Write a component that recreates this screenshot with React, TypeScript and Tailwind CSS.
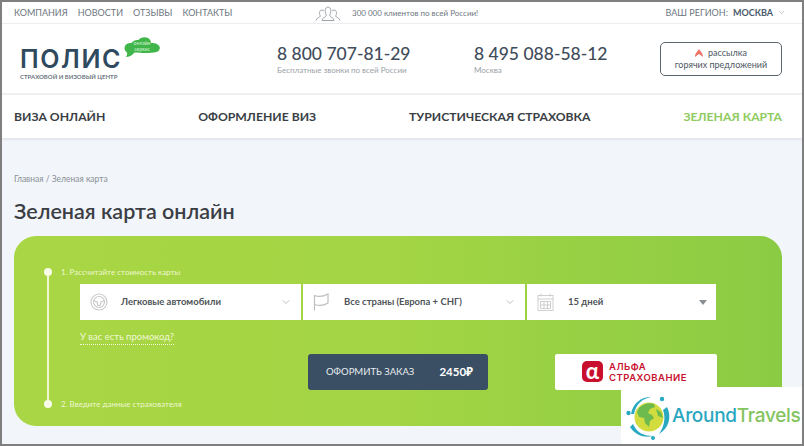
import { ChevronDown } from 'lucide-react';

const font = { fontFamily: 'Lato, "Noto Sans", sans-serif' };

function People() {
  return (
    <svg width="26" height="18" viewBox="0 0 26 18" fill="none" stroke="#8a929c" strokeWidth="0.8">
      <path d="M1 16.5c0-2.5 4-3 4.5-4.5-1.5-1.5-1.5-6 1.5-6 1 0 1.500.3 2 1" />
      <path d="M25 16.500c0-2.500-4-3-4.500-4.500 1.500-1.500 1.500-6-1.500-6-1 0-1.500.3-2 1" />
      <path d="M7 16.500c0-3 4-3 4.500-5.500C9.500 9 9.500 3 13 3s3.500 6 1.500 8c.5 2.500 4.500 2.500 4.500 5.500z" />
    </svg>
  );
}

function Wheel() {
  return (
    <svg width="18" height="18" viewBox="0 0 18 18" fill="none" stroke="#c9c9c9" strokeWidth="1.100">
      <circle cx="9" cy="9" r="8" />
      <circle cx="9" cy="9" r="5.500" />
      <path d="M3.500 7.500 7 9l1 3.500h2L11 9l3.500-1.500" />
    </svg>
  );
}

function Flag() {
  return (
    <svg width="16" height="18" viewBox="0 0 16 18" fill="none" stroke="#bdbdbd" strokeWidth="1.200">
      <path d="M1.500 17.500V2.500c4 1.500 9 1 13.500-1.500v9c-4 2.500-9 3-13.500 1.500" />
    </svg>
  );
}

function CalendarIcon() {
  return (
    <svg width="17" height="18" viewBox="0 0 17 18" fill="none" stroke="#c4c4c4" strokeWidth="0.8">
      <rect x="1" y="2.500" width="15" height="15" />
      <path d="M1 6h15M4 .5v3M13 .5v3M3.500 8.500h10v7h-10zM3.500 12h10M7 8.500v7M10.500 8.500v7" />
    </svg>
  );
}

function Cloud() {
  return (
    <svg className="absolute inset-0" width="36" height="23" viewBox="0 0 36 23">
      <path
        d="M2 21c1-1.500 1.500-3 1-4.500C.5 15 0 12.500 1 10c1-2.500 4-3.500 6.500-3C9 4.500 12 3.500 14.500 4 16.500 1 21 .5 24 2c2 1 3 3 3 5 3-.5 7 .5 8.500 3.500 1 2.500-.5 5-3 5.500-6 1.500-16 1-22 .5C8 19.500 5 21 2 21z"
        fill="#3fb54a"
      />
    </svg>
  );
}

function Globe() {
  return (
    <svg width="46" height="46" viewBox="0 0 46 46">
      <circle cx="23" cy="23" r="14.500" fill="#d3dc3f" />
      <path d="M13 14c4-4 10-6 15-4l1 3-5 2-2 4 4 2 2 3-4 3-1 6-4-4-1-5-5-1-2-5z" fill="#6dbb4e" />
      <path d="M30 15l5 3 2 6-5-2z" fill="#6dbb4e" />
      <path d="M5 20C7 9 15 3 25 3c-9 2-15 7-17 17z" fill="#29a9c1" />
      <path d="M41 13c5 10 2 21-8 27 5-7 7-16 4-24z" fill="#29a9c1" />
      <path d="M7 30c4 9 11 12 20 12-8 2-17 0-23-9z" fill="#29a9c1" />
      <circle cx="2.500" cy="19" r="2.200" fill="#29a9c1" />
      <circle cx="36" cy="5" r="2.200" fill="#29a9c1" />
      <circle cx="27" cy="44" r="2" fill="#29a9c1" />
    </svg>
  );
}

function SelectBox({ icon, label, width, pad, last }: { icon: React.ReactNode; label: string; width: string; pad: string; last?: boolean }) {
  return (
    <div className={`${width} h-full bg-white flex items-center pl-[10px] pr-[9px]`}>
      <span className={`${pad} shrink-0 flex`}>{icon}</span>
      <span className="flex-1 text-[9.500px] font-bold text-[#4f5459] whitespace-nowrap">{label}</span>
      {last ? (
        <span className="w-0 h-0 border-x-[4.500px] border-x-transparent border-t-[5px] border-t-[#8a8f94]" />
      ) : (
        <ChevronDown size={12} strokeWidth={1.100} color="#8b8f93" />
      )}
    </div>
  );
}

export default function App() {
  return (
    <div style={font} className="relative w-[804px] h-[446px] overflow-hidden border-2 border-[#7f7f7f] bg-[#f2f5fa] flex flex-col">
      {/* верхняя полоса */}
      <div className="h-[22px] bg-white border-b border-[#eceef0] flex items-center pl-3 pr-[16px] text-[9px] text-[#6d7680] shrink-0">
        <div className="w-[301px] flex gap-[10px] whitespace-nowrap">
          <span>КОМПАНИЯ</span>
          <span>НОВОСТИ</span>
          <span>ОТЗЫВЫ</span>
          <span>КОНТАКТЫ</span>
        </div>
        <People />
        <span className="ml-[11px] text-[8px] text-[#6d7680] whitespace-nowrap">300 000 клиентов по всей России!</span>
        <div className="ml-auto flex items-center whitespace-nowrap">
          <span>ВАШ РЕГИОН:</span>
          <span className="ml-[5px] font-bold text-[#4b5a6b]">МОСКВА</span>
          <ChevronDown size={9} strokeWidth={1.200} color="#7d858e" className="ml-[4px]" />
        </div>
      </div>

      {/* шапка */}
      <div className="h-[71px] bg-white border-b-2 border-[#eef0f2] flex items-center shrink-0 pl-[18px] pr-[20px]">
        <div className="relative w-[257px] h-full">
          <div className="pt-[21px] text-[25px] leading-[28px] font-semibold text-[#2f4a5f] tracking-[1.600px]" style={{ fontFamily: 'Inter, sans-serif' }}>
            ПОЛИС
          </div>
          <div className="text-[6px] font-bold text-[#6c7680] leading-[8px] whitespace-nowrap">СТРАХОВОЙ И ВИЗОВЫЙ ЦЕНТР</div>
          <div className="absolute left-[104px] top-[12px] w-[36px] h-[23px]">
            <Cloud />
            <div className="relative pt-[5px] text-[#d8f3d4] text-[5px] leading-[5.500px] text-center">
              онлайн<br />сервис
            </div>
          </div>
        </div>
        <div className="w-[197px]">
          <div className="text-[17.500px] leading-[22px] font-medium text-[#3f4c5a] whitespace-nowrap">8 800 707-81-29</div>
          <div className="text-[8px] leading-[10px] text-[#9aa1a8] whitespace-nowrap">Бесплатные звонки по всей России</div>
        </div>
        <div className="w-[186px]">
          <div className="text-[17.500px] leading-[22px] font-medium text-[#3f4c5a] whitespace-nowrap">8 495 088-58-12</div>
          <div className="text-[8px] leading-[10px] text-[#9aa1a8]">Москва</div>
        </div>
        <div className="w-[122px] h-[34px] rounded-[5px] border border-[#5a6670] flex flex-col items-center justify-center text-[9px] leading-[12px] text-[#4c565f]">
          <span className="flex items-center gap-[5px]">
            <svg width="8" height="8" viewBox="0 0 8 8">
              <path d="M4 0C5 2 8 4 8 8L4 5 0 8C0 4 3 2 4 0z" fill="#ee7468" />
            </svg>
            рассылка
          </span>
          <span>горячих предложений</span>
        </div>
      </div>

      {/* навигация */}
      <div className="h-[44px] pt-[2px] bg-white border-b border-[#e3e6ea] shadow-[0_1px_2px_rgba(0,0,0,0.06)] flex items-center justify-between pl-3 pr-[20px] text-[12.200px] font-bold text-[#3a3f45] whitespace-nowrap shrink-0">
        <span>ВИЗА ОНЛАЙН</span>
        <span>ОФОРМЛЕНИЕ ВИЗ</span>
        <span>ТУРИСТИЧЕСКАЯ СТРАХОВКА</span>
        <span className="text-[#8fcb5f]">ЗЕЛЕНАЯ КАРТА</span>
      </div>

      {/* контент */}
      <div className="flex-1 pl-3 pr-[20px] flex flex-col">
        <div className="mt-[34px] text-[8.500px] leading-[12px] text-[#8a9098]">Главная / Зеленая карта</div>
        <h1 className="mt-[13px] text-[21.500px] leading-[26px] font-semibold text-[#3a3e44] whitespace-nowrap">Зеленая карта онлайн</h1>
        <div className="mt-[12px] h-[190px] rounded-[22px] bg-gradient-to-r from-[#a9d644] via-[#a3d544] to-[#8bcb44] flex pl-[30px] pt-[32px]">
          <div className="w-2 h-[140px] flex flex-col items-center shrink-0">
            <span className="w-2 h-2 rounded-full bg-[#f7fbe8] shrink-0" />
            <span className="w-[1.500px] flex-1 bg-[#eef7cf]" />
            <span className="w-2 h-2 rounded-full bg-[#f7fbe8] shrink-0" />
          </div>
          <div className="ml-[9px] flex flex-col h-[140px]">
            <div className="text-[8px] leading-[8px] text-[#eef7d0] whitespace-nowrap">1. Рассчитайте стоимость карты</div>
            <div className="ml-[19px] mt-[8px] h-[36px] flex gap-[2px]">
              <SelectBox icon={<Wheel />} label="Легковые автомобили" width="w-[221px]" pad="mr-[13px]" />
              <SelectBox icon={<Flag />} label="Все страны (Европа + СНГ)" width="w-[222px]" pad="mr-[15px]" />
              <SelectBox icon={<CalendarIcon />} label="15 дней" width="w-[189px]" pad="mr-[14px]" last />
            </div>
            <div className="ml-[19px] mt-[10px] w-fit text-[9.500px] leading-[14px] text-[#f0f8d4] border-b border-dotted border-[#f0f8d4] whitespace-nowrap">
              У вас есть промокод?
            </div>
            <div className="ml-[247px] mt-[9px] flex">
              <div className="w-[180px] h-[36px] rounded-[3px] bg-[#3a4f63] flex items-center justify-between pl-[18px] pr-[15px] text-white">
                <span className="text-[9.500px] text-[#e8edf0] whitespace-nowrap">ОФОРМИТЬ ЗАКАЗ</span>
                <span className="text-[11.500px] font-bold whitespace-nowrap">2450₽</span>
              </div>
              <div className="ml-[67px] w-[162px] h-[36px] rounded-[2px] bg-white flex items-start pt-[7px] pl-[27px] gap-[6px]">
                <span className="w-[21px] h-[21px] rounded-[5px] bg-[#c8102e] text-white text-[22px] leading-[20px] text-center font-bold">α</span>
                <span className="text-[9.500px] leading-[11px] font-semibold text-[#c8102e] tracking-[0.5px]" style={{ fontFamily: 'Inter, sans-serif' }}>
                  АЛЬФА<br />СТРАХОВАНИЕ
                </span>
              </div>
            </div>
            <div className="mt-auto text-[8px] leading-[8px] text-[#eef7d0] whitespace-nowrap">2. Введите данные страхователя</div>
          </div>
        </div>
      </div>

      {/* водяной знак */}
      <div className="absolute right-[-2px] bottom-[-2px] w-[183px] h-[59px] bg-white flex items-center pl-[5px]">
        <Globe />
        <span className="text-[19px] font-medium tracking-[-0.3px] whitespace-nowrap" style={{ fontFamily: 'Inter, sans-serif' }}>
          <span className="text-[#2aa7bf]">Around</span>
          <span className="text-[#84c45f]">Travels</span>
        </span>
      </div>
    </div>
  );
}
